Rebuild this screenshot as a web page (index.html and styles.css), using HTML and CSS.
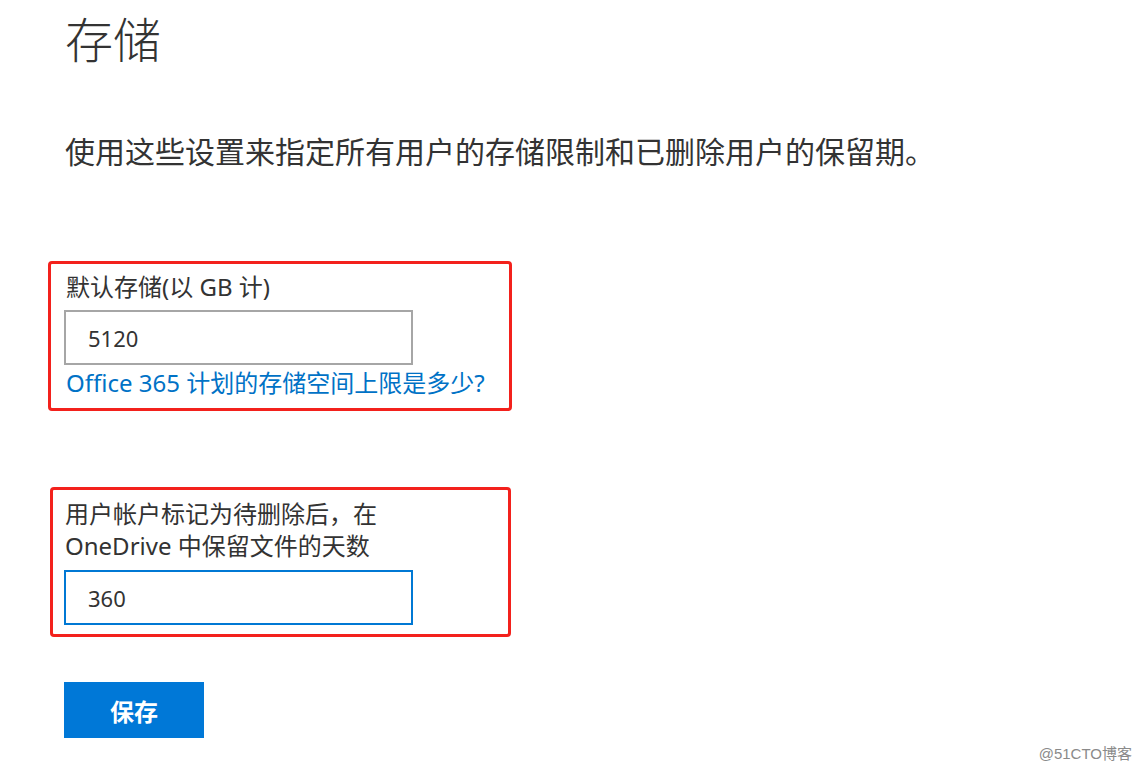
FILE: index.html
```html
<!DOCTYPE html>
<html lang="zh-CN">
<head>
<meta charset="utf-8">
<title>存储</title>
<link rel="stylesheet" href="styles.css">
</head>
<body>
<main class="page">
  <h1 class="title">存储</h1>
  <p class="desc">使用这些设置来指定所有用户的存储限制和已删除用户的保留期。</p>

  <section class="annot annot-one">
    <label class="label" for="quota">默认存储(以 GB 计)</label>
    <div class="field"><input id="quota" class="input" type="text" value="5120"></div>
    <a class="link" href="#">Office 365 计划的存储空间上限是多少?</a>
  </section>

  <section class="annot annot-two">
    <label class="label label-two" for="days">用户帐户标记为待删除后，在<br>OneDrive 中保留文件的天数</label>
    <div class="field"><input id="days" class="input input-focus" type="text" value="360"></div>
  </section>

  <button class="save" type="button">保存</button>
</main>
<div class="watermark">@51CTO博客</div>
</body>
</html>
```

FILE: styles.css
```css
html, body {
  margin: 0;
  padding: 0;
  background: #ffffff;
}

body {
  width: 1143px;
  height: 775px;
  position: relative;
  overflow: hidden;
  font-family: "Noto Sans", "Noto Sans CJK SC", sans-serif;
  color: #333333;
}

.page {
  padding: 0 0 0 64px;
  display: flex;
  flex-direction: column;
  align-items: flex-start;
}

.title {
  margin: 12px 0 0 1px;
  font-size: 48px;
  line-height: 56px;
  font-weight: 300;
  color: #333333;
}

.desc {
  margin: 64px 0 0 1px;
  font-size: 30px;
  line-height: 40px;
  font-weight: 400;
  color: #333333;
}

.annot {
  box-sizing: border-box;
  border: 3px solid #f3211c;
  border-radius: 4px;
  display: flex;
  flex-direction: column;
  align-items: flex-start;
}

.annot-one {
  margin: 89px 0 0 -16px;
  width: 464px;
  padding: 8px 0 10px 13px;
}

.annot-two {
  margin: 76px 0 0 -14px;
  width: 461px;
  padding: 8px 0 9px 11px;
}

.label {
  display: block;
  margin-left: 2px;
  font-size: 24px;
  line-height: 30px;
  color: #333333;
}

.label-two {
  line-height: 32px;
  margin-left: 1px;
}

.field {
  margin-top: 8px;
}

.input {
  box-sizing: border-box;
  width: 349px;
  height: 55px;
  border: 2px solid #a6a6a6;
  border-radius: 0;
  padding: 0 0 0 22px;
  font-family: "Noto Sans", "Noto Sans CJK SC", sans-serif;
  font-size: 22px;
  color: #333333;
  background: #ffffff;
  outline: none;
  display: block;
}

.input-focus {
  border-color: #0078d4;
}

.link {
  margin: 3px 0 0 2px;
  font-size: 24px;
  line-height: 30px;
  color: #0072c6;
  text-decoration: none;
}

.save {
  margin-top: 45px;
  width: 140px;
  height: 56px;
  border: none;
  border-radius: 0;
  background: #0078d7;
  color: #ffffff;
  font-family: "Noto Sans CJK SC", sans-serif;
  font-size: 24px;
  font-weight: 700;
  padding: 0;
  cursor: pointer;
}

.watermark {
  position: absolute;
  right: 11px;
  bottom: 12px;
  font-family: "Liberation Sans", "Noto Sans CJK SC", sans-serif;
  font-size: 15px;
  color: #8a8a8a;
}
```
